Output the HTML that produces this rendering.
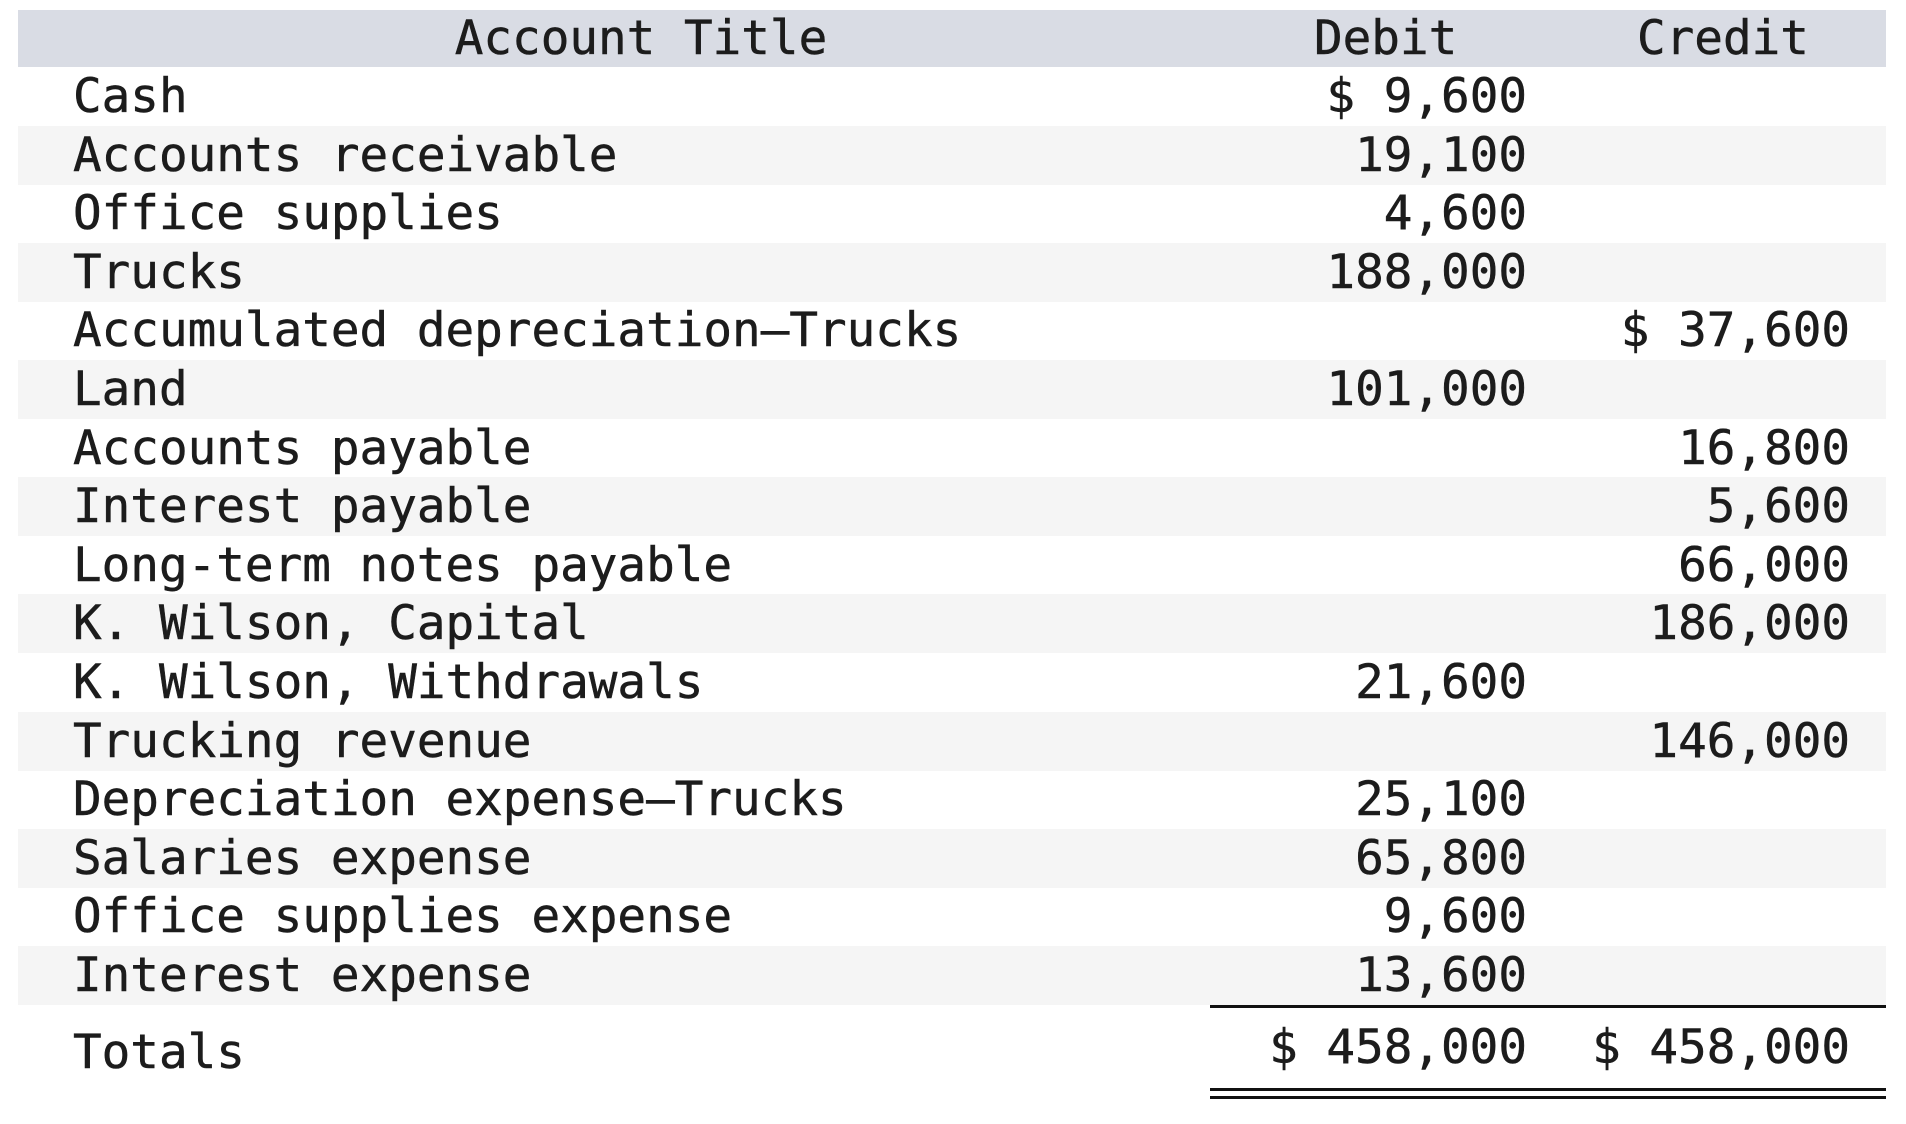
<!DOCTYPE html>
<html><head><meta charset="utf-8"><style>
body{margin:0;width:1906px;height:1124px;background:#fff;position:relative;overflow:hidden;font-family:"DejaVu Sans Mono","Liberation Mono",monospace;font-size:47.6px;color:#1c1c1c;-webkit-text-stroke:0.5px #1c1c1c;}
.r{position:absolute;left:18px;width:1868px;height:59px;}
.g{background:#f5f5f5;}
.t{position:absolute;white-space:pre;line-height:59px;}
.a{left:55px;}
.d{right:359px;}
.c{right:36px;}
.line{position:absolute;left:1210px;width:676px;height:3px;background:#111;}
</style></head><body>
<div class="r" style="top:10px;height:57px;background:#d9dce4">
<div class="t" style="left:0;width:1246px;text-align:center;line-height:57px">Account Title</div>
<div class="t" style="left:1296px;line-height:57px">Debit</div>
<div class="t" style="left:1619px;line-height:57px">Credit</div>
</div>
<div class="r" style="top:67px"><div class="t a">Cash</div><div class="t d">$ 9,600</div></div>
<div class="r g" style="top:125.6px"><div class="t a">Accounts receivable</div><div class="t d">19,100</div></div>
<div class="r" style="top:184.2px"><div class="t a">Office supplies</div><div class="t d">4,600</div></div>
<div class="r g" style="top:242.8px"><div class="t a">Trucks</div><div class="t d">188,000</div></div>
<div class="r" style="top:301.4px"><div class="t a">Accumulated depreciation—Trucks</div><div class="t c">$ 37,600</div></div>
<div class="r g" style="top:360px"><div class="t a">Land</div><div class="t d">101,000</div></div>
<div class="r" style="top:418.6px"><div class="t a">Accounts payable</div><div class="t c">16,800</div></div>
<div class="r g" style="top:477.2px"><div class="t a">Interest payable</div><div class="t c">5,600</div></div>
<div class="r" style="top:535.8px"><div class="t a">Long-term notes payable</div><div class="t c">66,000</div></div>
<div class="r g" style="top:594.4px"><div class="t a">K. Wilson, Capital</div><div class="t c">186,000</div></div>
<div class="r" style="top:653px"><div class="t a">K. Wilson, Withdrawals</div><div class="t d">21,600</div></div>
<div class="r g" style="top:711.6px"><div class="t a">Trucking revenue</div><div class="t c">146,000</div></div>
<div class="r" style="top:770.2px"><div class="t a">Depreciation expense—Trucks</div><div class="t d">25,100</div></div>
<div class="r g" style="top:828.8px"><div class="t a">Salaries expense</div><div class="t d">65,800</div></div>
<div class="r" style="top:887.4px"><div class="t a">Office supplies expense</div><div class="t d">9,600</div></div>
<div class="r g" style="top:946px"><div class="t a">Interest expense</div><div class="t d">13,600</div></div>
<div class="line" style="top:1005px"></div>
<div class="r" style="top:1018px;height:64px"><div class="t a" style="top:5px">Totals</div><div class="t d">$ 458,000</div><div class="t c">$ 458,000</div></div>
<div class="line" style="top:1088px"></div>
<div class="line" style="top:1096px"></div>
</body></html>
